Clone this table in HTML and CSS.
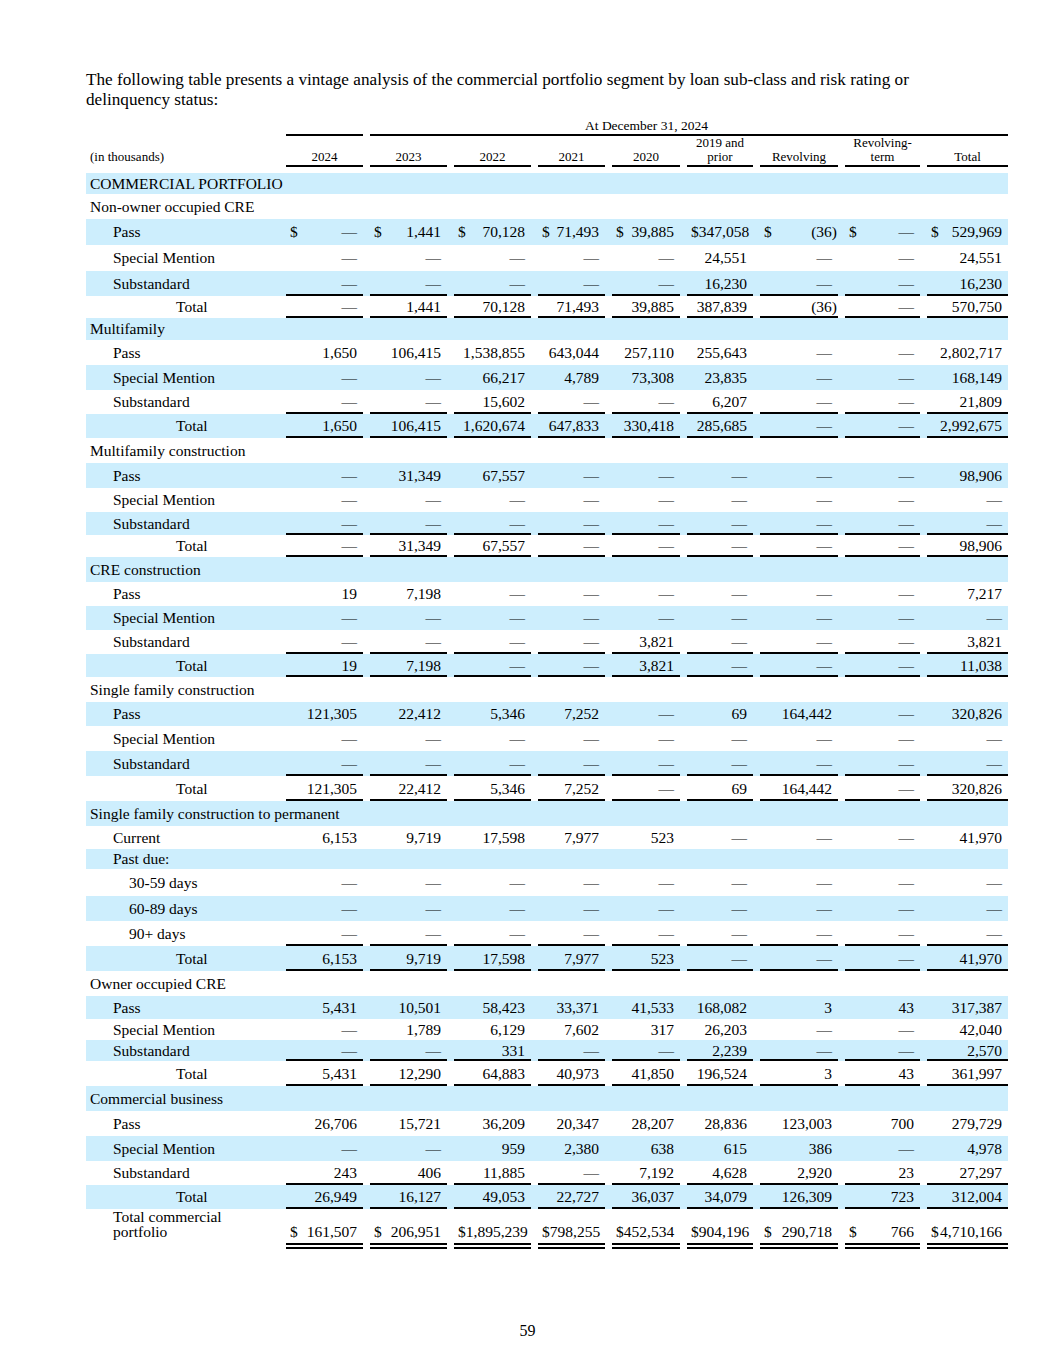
FILE: index.html
```html
<!DOCTYPE html>
<html>
<head>
<meta charset="utf-8">
<link rel="stylesheet" href="styles.css">
</head>
<body>
<div class="page">
<div class="content">
<p class="intro">The following table presents a vintage analysis of the commercial portfolio segment by loan sub-class and risk rating or delinquency status:</p>
<table class="vint">
<colgroup>
<col class="c-l"><col class="c84"><col class="c84"><col class="c84"><col class="c74"><col class="c75"><col class="c73"><col class="c85"><col class="c82"><col class="c88">
</colgroup>
<tr class="ha"><td></td><td class="ul"></td><td class="at ul" colspan="8">At December 31, 2024</td></tr>
<tr class="hb"><td class="hl">(in thousands)</td><td class="hc ul">2024</td><td class="hc ul">2023</td><td class="hc ul">2022</td><td class="hc ul">2021</td><td class="hc ul">2020</td><td class="hc ul">2019 and<br>prior</td><td class="hc ul">Revolving</td><td class="hc ul">Revolving-<br>term</td><td class="hc ul">Total</td></tr>
<tr class="gap"><td colspan="10"></td></tr>

<tr class="s h21"><td class="l" colspan="10">COMMERCIAL PORTFOLIO</td></tr>
<tr><td class="l" colspan="10">Non-owner occupied CRE</td></tr>
<tr class="s h26"><td class="l i1">Pass</td><td class="n"><div class="mf"><span>$</span><span>—</span></div></td><td class="n"><div class="mf"><span>$</span><span>1,441</span></div></td><td class="n"><div class="mf"><span>$</span><span>70,128</span></div></td><td class="n"><div class="mf"><span>$</span><span>71,493</span></div></td><td class="n"><div class="mf"><span>$</span><span>39,885</span></div></td><td class="n"><div class="mf"><span>$</span><span>347,058</span></div></td><td class="n"><div class="mf"><span>$</span><span class="neg">(36)</span></div></td><td class="n"><div class="mf"><span>$</span><span>—</span></div></td><td class="n"><div class="mf"><span>$</span><span>529,969</span></div></td></tr>
<tr class="h26"><td class="l i1">Special Mention</td><td class="n">—</td><td class="n">—</td><td class="n">—</td><td class="n">—</td><td class="n">—</td><td class="n">24,551</td><td class="n">—</td><td class="n">—</td><td class="n">24,551</td></tr>
<tr class="s"><td class="l i1">Substandard</td><td class="n ul">—</td><td class="n ul">—</td><td class="n ul">—</td><td class="n ul">—</td><td class="n ul">—</td><td class="n ul">16,230</td><td class="n ul">—</td><td class="n ul">—</td><td class="n ul">16,230</td></tr>
<tr class="h22"><td class="l it">Total</td><td class="n ul">—</td><td class="n ul">1,441</td><td class="n ul">70,128</td><td class="n ul">71,493</td><td class="n ul">39,885</td><td class="n ul">387,839</td><td class="n ul"><span class="neg">(36)</span></td><td class="n ul">—</td><td class="n ul">570,750</td></tr>

<tr class="s h22"><td class="l" colspan="10">Multifamily</td></tr>
<tr><td class="l i1">Pass</td><td class="n">1,650</td><td class="n">106,415</td><td class="n">1,538,855</td><td class="n">643,044</td><td class="n">257,110</td><td class="n">255,643</td><td class="n">—</td><td class="n">—</td><td class="n">2,802,717</td></tr>
<tr class="s"><td class="l i1">Special Mention</td><td class="n">—</td><td class="n">—</td><td class="n">66,217</td><td class="n">4,789</td><td class="n">73,308</td><td class="n">23,835</td><td class="n">—</td><td class="n">—</td><td class="n">168,149</td></tr>
<tr class="h24"><td class="l i1">Substandard</td><td class="n ul">—</td><td class="n ul">—</td><td class="n ul">15,602</td><td class="n ul">—</td><td class="n ul">—</td><td class="n ul">6,207</td><td class="n ul">—</td><td class="n ul">—</td><td class="n ul">21,809</td></tr>
<tr class="s h24"><td class="l it">Total</td><td class="n ul">1,650</td><td class="n ul">106,415</td><td class="n ul">1,620,674</td><td class="n ul">647,833</td><td class="n ul">330,418</td><td class="n ul">285,685</td><td class="n ul">—</td><td class="n ul">—</td><td class="n ul">2,992,675</td></tr>

<tr><td class="l" colspan="10">Multifamily construction</td></tr>
<tr class="s"><td class="l i1">Pass</td><td class="n">—</td><td class="n">31,349</td><td class="n">67,557</td><td class="n">—</td><td class="n">—</td><td class="n">—</td><td class="n">—</td><td class="n">—</td><td class="n">98,906</td></tr>
<tr class="h24"><td class="l i1">Special Mention</td><td class="n">—</td><td class="n">—</td><td class="n">—</td><td class="n">—</td><td class="n">—</td><td class="n">—</td><td class="n">—</td><td class="n">—</td><td class="n">—</td></tr>
<tr class="s h23"><td class="l i1">Substandard</td><td class="n ul">—</td><td class="n ul">—</td><td class="n ul">—</td><td class="n ul">—</td><td class="n ul">—</td><td class="n ul">—</td><td class="n ul">—</td><td class="n ul">—</td><td class="n ul">—</td></tr>
<tr class="h22"><td class="l it">Total</td><td class="n ul">—</td><td class="n ul">31,349</td><td class="n ul">67,557</td><td class="n ul">—</td><td class="n ul">—</td><td class="n ul">—</td><td class="n ul">—</td><td class="n ul">—</td><td class="n ul">98,906</td></tr>

<tr class="s"><td class="l" colspan="10">CRE construction</td></tr>
<tr class="h24"><td class="l i1">Pass</td><td class="n">19</td><td class="n">7,198</td><td class="n">—</td><td class="n">—</td><td class="n">—</td><td class="n">—</td><td class="n">—</td><td class="n">—</td><td class="n">7,217</td></tr>
<tr class="s h24"><td class="l i1">Special Mention</td><td class="n">—</td><td class="n">—</td><td class="n">—</td><td class="n">—</td><td class="n">—</td><td class="n">—</td><td class="n">—</td><td class="n">—</td><td class="n">—</td></tr>
<tr class="h24"><td class="l i1">Substandard</td><td class="n ul">—</td><td class="n ul">—</td><td class="n ul">—</td><td class="n ul">—</td><td class="n ul">3,821</td><td class="n ul">—</td><td class="n ul">—</td><td class="n ul">—</td><td class="n ul">3,821</td></tr>
<tr class="s h23"><td class="l it">Total</td><td class="n ul">19</td><td class="n ul">7,198</td><td class="n ul">—</td><td class="n ul">—</td><td class="n ul">3,821</td><td class="n ul">—</td><td class="n ul">—</td><td class="n ul">—</td><td class="n ul">11,038</td></tr>

<tr><td class="l" colspan="10">Single family construction</td></tr>
<tr class="s h24"><td class="l i1">Pass</td><td class="n">121,305</td><td class="n">22,412</td><td class="n">5,346</td><td class="n">7,252</td><td class="n">—</td><td class="n">69</td><td class="n">164,442</td><td class="n">—</td><td class="n">320,826</td></tr>
<tr><td class="l i1">Special Mention</td><td class="n">—</td><td class="n">—</td><td class="n">—</td><td class="n">—</td><td class="n">—</td><td class="n">—</td><td class="n">—</td><td class="n">—</td><td class="n">—</td></tr>
<tr class="s"><td class="l i1">Substandard</td><td class="n ul">—</td><td class="n ul">—</td><td class="n ul">—</td><td class="n ul">—</td><td class="n ul">—</td><td class="n ul">—</td><td class="n ul">—</td><td class="n ul">—</td><td class="n ul">—</td></tr>
<tr><td class="l it">Total</td><td class="n ul">121,305</td><td class="n ul">22,412</td><td class="n ul">5,346</td><td class="n ul">7,252</td><td class="n ul">—</td><td class="n ul">69</td><td class="n ul">164,442</td><td class="n ul">—</td><td class="n ul">320,826</td></tr>

<tr class="s"><td class="l" colspan="10">Single family construction to permanent</td></tr>
<tr class="h23"><td class="l i1">Current</td><td class="n">6,153</td><td class="n">9,719</td><td class="n">17,598</td><td class="n">7,977</td><td class="n">523</td><td class="n">—</td><td class="n">—</td><td class="n">—</td><td class="n">41,970</td></tr>
<tr class="s h20"><td class="l i1" colspan="10">Past due:</td></tr>
<tr class="h27"><td class="l i2">30-59 days</td><td class="n">—</td><td class="n">—</td><td class="n">—</td><td class="n">—</td><td class="n">—</td><td class="n">—</td><td class="n">—</td><td class="n">—</td><td class="n">—</td></tr>
<tr class="s"><td class="l i2">60-89 days</td><td class="n">—</td><td class="n">—</td><td class="n">—</td><td class="n">—</td><td class="n">—</td><td class="n">—</td><td class="n">—</td><td class="n">—</td><td class="n">—</td></tr>
<tr><td class="l i2">90+ days</td><td class="n ul">—</td><td class="n ul">—</td><td class="n ul">—</td><td class="n ul">—</td><td class="n ul">—</td><td class="n ul">—</td><td class="n ul">—</td><td class="n ul">—</td><td class="n ul">—</td></tr>
<tr class="s"><td class="l it">Total</td><td class="n ul">6,153</td><td class="n ul">9,719</td><td class="n ul">17,598</td><td class="n ul">7,977</td><td class="n ul">523</td><td class="n ul">—</td><td class="n ul">—</td><td class="n ul">—</td><td class="n ul">41,970</td></tr>

<tr><td class="l" colspan="10">Owner occupied CRE</td></tr>
<tr class="s h23"><td class="l i1">Pass</td><td class="n">5,431</td><td class="n">10,501</td><td class="n">58,423</td><td class="n">33,371</td><td class="n">41,533</td><td class="n">168,082</td><td class="n">3</td><td class="n">43</td><td class="n">317,387</td></tr>
<tr class="h21"><td class="l i1">Special Mention</td><td class="n">—</td><td class="n">1,789</td><td class="n">6,129</td><td class="n">7,602</td><td class="n">317</td><td class="n">26,203</td><td class="n">—</td><td class="n">—</td><td class="n">42,040</td></tr>
<tr class="s h21"><td class="l i1">Substandard</td><td class="n ul">—</td><td class="n ul">—</td><td class="n ul">331</td><td class="n ul">—</td><td class="n ul">—</td><td class="n ul">2,239</td><td class="n ul">—</td><td class="n ul">—</td><td class="n ul">2,570</td></tr>
<tr><td class="l it">Total</td><td class="n ul">5,431</td><td class="n ul">12,290</td><td class="n ul">64,883</td><td class="n ul">40,973</td><td class="n ul">41,850</td><td class="n ul">196,524</td><td class="n ul">3</td><td class="n ul">43</td><td class="n ul">361,997</td></tr>

<tr class="s"><td class="l" colspan="10">Commercial business</td></tr>
<tr><td class="l i1">Pass</td><td class="n">26,706</td><td class="n">15,721</td><td class="n">36,209</td><td class="n">20,347</td><td class="n">28,207</td><td class="n">28,836</td><td class="n">123,003</td><td class="n">700</td><td class="n">279,729</td></tr>
<tr class="s"><td class="l i1">Special Mention</td><td class="n">—</td><td class="n">—</td><td class="n">959</td><td class="n">2,380</td><td class="n">638</td><td class="n">615</td><td class="n">386</td><td class="n">—</td><td class="n">4,978</td></tr>
<tr class="h24"><td class="l i1">Substandard</td><td class="n ul">243</td><td class="n ul">406</td><td class="n ul">11,885</td><td class="n ul">—</td><td class="n ul">7,192</td><td class="n ul">4,628</td><td class="n ul">2,920</td><td class="n ul">23</td><td class="n ul">27,297</td></tr>
<tr class="s h24"><td class="l it">Total</td><td class="n ul">26,949</td><td class="n ul">16,127</td><td class="n ul">49,053</td><td class="n ul">22,727</td><td class="n ul">36,037</td><td class="n ul">34,079</td><td class="n ul">126,309</td><td class="n ul">723</td><td class="n ul">312,004</td></tr>

<tr class="gt"><td class="l i1 gl">Total commercial<br>portfolio</td><td class="n dul"><div class="mf"><span>$</span><span>161,507</span></div></td><td class="n dul"><div class="mf"><span>$</span><span>206,951</span></div></td><td class="n dul"><div class="mf"><span>$</span><span>1,895,239</span></div></td><td class="n dul"><div class="mf"><span>$</span><span>798,255</span></div></td><td class="n dul"><div class="mf"><span>$</span><span>452,534</span></div></td><td class="n dul"><div class="mf"><span>$</span><span>904,196</span></div></td><td class="n dul"><div class="mf"><span>$</span><span>290,718</span></div></td><td class="n dul"><div class="mf"><span>$</span><span>766</span></div></td><td class="n dul"><div class="mf"><span>$</span><span>4,710,166</span></div></td></tr>
</table>
</div>
<div class="pageno">59</div>
</div>
</body>
</html>
```

FILE: styles.css
```css
html, body {
  margin: 0;
  background: #ffffff;
  color: #000000;
  font-family: "Liberation Serif", "Times New Roman", serif;
}

.page {
  padding-top: 70px;
}

.content {
  margin-left: 86px;
  width: 922px;
}

.intro {
  margin: 0;
  width: 850px;
  font-size: 17.2px;
  line-height: 20px;
}

.vint {
  margin-top: 7px;
  border-collapse: collapse;
  table-layout: fixed;
  width: 922px;
  font-size: 15.5px;
}

.c-l { width: 193px; }
.c84 { width: 84px; }
.c74 { width: 74px; }
.c75 { width: 75px; }
.c73 { width: 73px; }
.c85 { width: 85px; }
.c82 { width: 82px; }
.c88 { width: 88px; }

.vint td {
  padding: 0;
  vertical-align: middle;
  white-space: nowrap;
}

.vint tr { height: 25px; }
.vint tr.h20 { height: 20px; }
.vint tr.h21 { height: 21px; }
.vint tr.h22 { height: 22px; }
.vint tr.h23 { height: 23px; }
.vint tr.h24 { height: 24px; }
.vint tr.h26 { height: 26px; }
.vint tr.h27 { height: 27px; }

.vint tr.s { background: #cdeefd; }

.vint tr.ha { height: 19px; }
.vint tr.hb { height: 31px; }
.vint tr.gap { height: 6px; }

.vint tr.ha td,
.vint tr.hb td {
  font-size: 13px;
  line-height: 14px;
  vertical-align: bottom;
  padding-bottom: 3px;
}

.vint tr.ha td.at {
  font-size: 13.5px;
  padding-left: 222px;
  text-align: left;
}

.vint td.hl {
  padding-left: 4px;
}

.vint td.hc {
  text-align: center;
  padding-left: 7px;
}

.vint td.l {
  padding-left: 4px;
}

.vint td.i1 { padding-left: 27px; }
.vint td.i2 { padding-left: 43px; }
.vint td.it { padding-left: 90px; }

.vint td.n {
  text-align: right;
  padding-left: 11px;
  padding-right: 6px;
}

.mf {
  display: flex;
  justify-content: space-between;
}

.neg {
  margin-right: -5px;
}

.ul {
  background-image: linear-gradient(#000, #000);
  background-repeat: no-repeat;
  background-position: right bottom;
  background-size: calc(100% - 7px) 2px;
}

.dul {
  background-image: linear-gradient(#000, #000), linear-gradient(#000, #000);
  background-repeat: no-repeat, no-repeat;
  background-position: right 0 bottom 0, right 0 bottom 4px;
  background-size: calc(100% - 7px) 2px, calc(100% - 7px) 2px;
}

.vint tr.gt { height: 40px; }

.vint tr.gt td.n {
  vertical-align: bottom;
  line-height: 16px;
  padding-bottom: 9px;
}

.vint tr.gt td.gl {
  vertical-align: top;
  line-height: 15px;
  white-space: normal;
}

.pageno {
  margin-top: 72px;
  text-align: center;
  font-size: 16px;
  line-height: 20px;
}
```
